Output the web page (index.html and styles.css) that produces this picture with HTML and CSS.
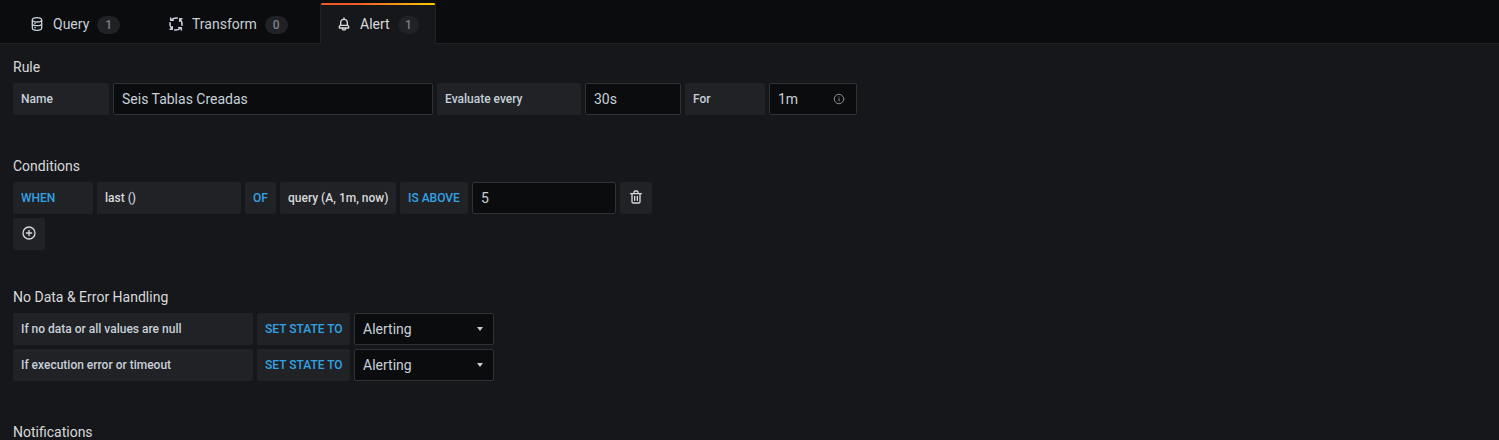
FILE: index.html
```html
<!DOCTYPE html>
<html lang="en">
<head>
<meta charset="utf-8">
<title>Alert</title>
<link rel="stylesheet" href="styles.css">
</head>
<body>
<nav class="tabs">
  <a class="tab tab-query">
    <svg class="icon" viewBox="0 0 24 24"><g fill="none" stroke="currentColor" stroke-width="2"><path d="M5 6c0-1.700 2.500-3.500 7-3.500s7 1.800 7 3.500v12c0 1.700-2.500 3.500-7 3.500s-7-1.800-7-3.500z"/><path d="M5 6c0 1.500 2.500 3 7 3s7-1.500 7-3M5 11.500c0 1.500 2.500 3 7 3s7-1.500 7-3"/></g><path d="M8 10.500h2v2H8zM8 16.500h2v2H8z" fill="currentColor"/></svg>
    <span>Query</span><span class="count">1</span>
  </a>
  <a class="tab tab-transform">
    <svg class="icon" viewBox="0 0 24 24" fill="none" stroke="currentColor" stroke-width="2.200" stroke-linecap="round" stroke-linejoin="round"><g id="arrow"><path d="M14 3C10 2.500 7.500 3.500 5 6M8 6.500H4V3"/></g><use href="#arrow" transform="rotate(90 12 12)"/><use href="#arrow" transform="rotate(180 12 12)"/><use href="#arrow" transform="rotate(270 12 12)"/></svg>
    <span>Transform</span><span class="count">0</span>
  </a>
  <a class="tab tab-alert active">
    <svg class="icon" viewBox="0 0 24 24" fill="currentColor"><path d="M18,13.180V10a6,6,0,0,0-5-5.910V3a1,1,0,0,0-2,0V4.090A6,6,0,0,0,6,10v3.180A3,3,0,0,0,4,16v2a1,1,0,0,0,1,1H8.140a4,4,0,0,0,7.720,0H19a1,1,0,0,0,1-1V16A3,3,0,0,0,18,13.180ZM8,10a4,4,0,0,1,8,0v3H8Zm4,10a2,2,0,0,1-1.720-1h3.440A2,2,0,0,1,12,20Zm6-3H6V16a1,1,0,0,1,1-1H17a1,1,0,0,1,1,1Z"/></svg>
    <span>Alert</span><span class="count">1</span>
  </a>
</nav>
<main class="content">
  <section class="group rule">
    <h4>Rule</h4>
    <div class="row">
      <label class="label w-name">Name</label>
      <div class="input w-rule">Seis Tablas Creadas</div>
      <label class="label w-every">Evaluate every</label>
      <div class="input w-interval">30s</div>
      <label class="label w-for">For</label>
      <div class="input w-duration">1m
        <svg class="info" viewBox="0 0 24 24" fill="none" stroke="currentColor" stroke-width="2" stroke-linecap="round"><circle cx="12" cy="12" r="9.500"/><path d="M12 11.500v4.500M12 8v.1"/></svg>
      </div>
    </div>
  </section>
  <section class="group conditions">
    <h4>Conditions</h4>
    <div class="row">
      <span class="label key w-when">WHEN</span>
      <span class="label value w-last">last <span class="parens">()</span></span>
      <span class="label key w-of">OF</span>
      <span class="label value w-query">query (A, 1m, now)</span>
      <span class="label key w-above">IS ABOVE</span>
      <div class="input w-threshold">5</div>
      <button class="btn"><svg class="icon" viewBox="0 0 24 24" fill="currentColor"><path d="M10,18a1,1,0,0,0,1-1V11a1,1,0,0,0-2,0v6A1,1,0,0,0,10,18ZM20,6H16V5a3,3,0,0,0-3-3H11A3,3,0,0,0,8,5V6H4A1,1,0,0,0,4,8H5V19a3,3,0,0,0,3,3h8a3,3,0,0,0,3-3V8h1a1,1,0,0,0,0-2ZM10,5a1,1,0,0,1,1-1h2a1,1,0,0,1,1,1V6H10Zm7,14a1,1,0,0,1-1,1H8a1,1,0,0,1-1-1V8H17Zm-3-1a1,1,0,0,0,1-1V11a1,1,0,0,0-2,0v6A1,1,0,0,0,14,18Z"/></svg></button>
    </div>
    <div class="row">
      <button class="btn"><svg class="icon" viewBox="0 0 24 24" fill="currentColor"><path d="M12,2A10,10,0,1,0,22,12,10,10,0,0,0,12,2Zm0,18a8,8,0,1,1,8-8A8,8,0,0,1,12,20Zm4-9H13V8a1,1,0,0,0-2,0v3H8a1,1,0,0,0,0,2h3v3a1,1,0,0,0,2,0V13h3a1,1,0,0,0,0-2Z"/></svg></button>
    </div>
  </section>
  <section class="group errors">
    <h4>No Data &amp; Error Handling</h4>
    <div class="row">
      <span class="label w-state">If no data or all values are null</span>
      <span class="label key w-set">SET STATE TO</span>
      <div class="input select">Alerting<i class="caret"></i></div>
    </div>
    <div class="row">
      <span class="label w-state">If execution error or timeout</span>
      <span class="label key w-set">SET STATE TO</span>
      <div class="input select">Alerting<i class="caret"></i></div>
    </div>
  </section>
  <section class="group">
    <h4>Notifications</h4>
  </section>
</main>
</body>
</html>
```
FILE: styles.css
```css
* { box-sizing: border-box; }
html, body { height: 100%; }
body {
  margin: 0;
  overflow: hidden;
  background: #16171b;
  color: #c7d0d9;
  font: 400 14px/21px Roboto, "Liberation Sans", sans-serif;
}
.tabs {
  display: flex;
  height: 44px;
  padding: 3px 0 0 13px;
  background: #0b0c0e;
  border-bottom: 1px solid #202226;
}
.tab {
  display: flex;
  align-items: center;
  height: 41px;
  padding: 1px 16px 0;
  border: 1px solid transparent;
  border-width: 0 1px;
}
.tab-query { width: 139px; padding-left: 15px; }
.tab-transform { width: 168px; padding-left: 15px; }
.tab-alert { width: 116px; padding-left: 15px; }
.tab .icon { margin-right: 8px; }
.active {
  color: #d8d9da;
  background: linear-gradient(90deg, #f05a28 30%, #fbca0a 99%) top / 100% 2px no-repeat, #16171b;
  border-color: #202226;
  border-radius: 2px 2px 0 0;
}
.icon { width: 16px; height: 16px; flex: none; }
.count {
  width: 23px;
  height: 18px;
  margin: 1px 0 0 8px;
  border-radius: 9px;
  background: #202226;
  color: #7b8087;
  font-size: 12px;
  font-weight: 500;
  line-height: 18px;
  text-align: center;
}
.content { padding: 13px 13px 0; }
.rule { height: 99px; }
.conditions { height: 131px; }
.errors { height: 135px; }
h4 {
  margin: 0 0 5px;
  color: #d8d9da;
  font-size: 14px;
  font-weight: 400;
  line-height: 21px;
}
.row { display: flex; gap: 4px; margin-bottom: 4px; }
.label, .input, .btn {
  display: flex;
  align-items: center;
  flex: none;
  height: 32px;
  padding: 0 8px;
  border-radius: 2px;
  white-space: nowrap;
}
.label { background: #202226; font-size: 12px; font-weight: 500; }
.key { color: #33a2e5; }
.value { color: #d8d9da; }
.parens { margin-left: 3px; color: #c7d0d9; }
.input { background: #0b0c0e; border: 1px solid #2c3235; }
.btn {
  justify-content: center;
  width: 32px;
  padding: 0 0 2px;
  border: 0;
  background: #202226;
  color: #d8d9da;
}
.w-name { width: 96px; }
.w-rule { width: 320px; }
.w-every { width: 144px; }
.w-interval { width: 96px; }
.w-for { width: 80px; }
.w-duration { width: 88px; justify-content: space-between; padding-right: 11px; }
.w-when { width: 80px; }
.w-last { width: 144px; }
.w-of { width: 31px; }
.w-query { width: 116px; }
.w-above { width: 68px; }
.w-threshold { width: 144px; }
.w-state { width: 240px; }
.w-set { width: 93px; }
.info { width: 12px; height: 12px; color: #8e8e8e; }
.select { width: 140px; justify-content: space-between; }
.caret {
  margin-right: 2px;
  border: 3.5px solid transparent;
  border-top: 4px solid #c7d0d9;
  border-bottom: 0;
}
```
